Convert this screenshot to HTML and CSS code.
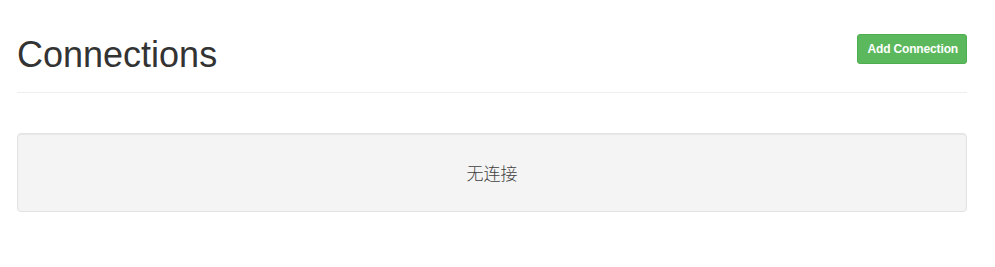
FILE: index.html
```html
<!DOCTYPE html>
<html>
<head>
<meta charset="utf-8">
<link rel="stylesheet" href="styles.css">
</head>
<body>
<div class="container">
  <div class="page-header">
    <h1 class="title">Connections</h1>
    <button class="btn-add">Add Connection</button>
  </div>
  <div class="well">
    <p class="empty">无连接</p>
  </div>
</div>
</body>
</html>
```
FILE: styles.css
```css
html, body {
  margin: 0;
  padding: 0;
  background: #fff;
}
body {
  font-family: "Liberation Sans", Arial, "Noto Sans CJK SC", sans-serif;
  color: #333;
  font-size: 14px;
  line-height: 1.42857;
}
.container {
  width: 950px;
  padding-left: 17px;
}
.page-header {
  display: flex;
  justify-content: space-between;
  align-items: flex-start;
  border-bottom: 1px solid #eee;
  padding-top: 35px;
  padding-bottom: 17px;
}
.title {
  margin: 0;
  font-size: 36px;
  font-weight: 500;
  line-height: 40px;
  color: #333;
}
.btn-add {
  margin-top: -1px;
  height: 30px;
  padding: 0 8px 0 9px;
  font-family: "Liberation Sans", Arial, sans-serif;
  font-size: 12px;
  font-weight: bold;
  letter-spacing: -0.15px;
  color: #fff;
  background: #5cb85c;
  border: 1px solid #4cae4c;
  border-radius: 3px;
}
.well {
  margin-top: 40px;
  box-sizing: border-box;
  height: 79px;
  background: #f4f4f4;
  border: 1px solid #e3e3e3;
  border-radius: 4px;
  box-shadow: inset 0 1px 1px rgba(0,0,0,0.05);
  display: flex;
  align-items: center;
  justify-content: center;
}
.empty {
  margin: 0;
  font-family: "Noto Sans CJK SC", sans-serif;
  font-size: 17px;
  font-weight: 300;
  color: #404040;
  padding-top: 1px;
}
```
